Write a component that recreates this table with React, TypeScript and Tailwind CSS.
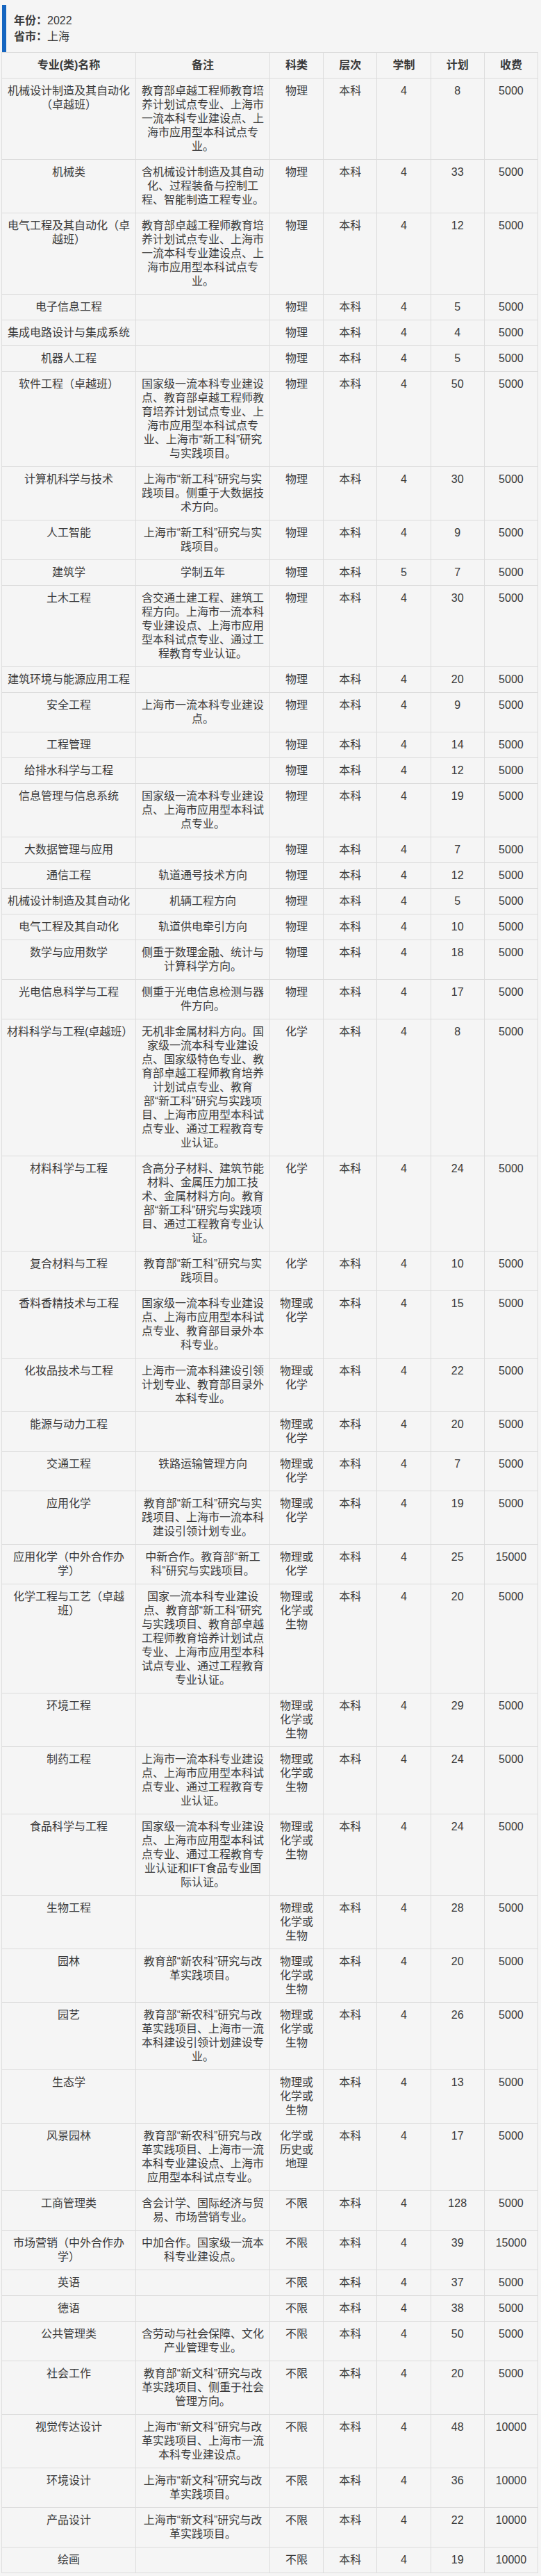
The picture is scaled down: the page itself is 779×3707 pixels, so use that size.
import React from 'react';

type Row = [string, string, string, number, number, number];

const rows: Row[] = [
  ['机械设计制造及其自动化（卓越班）', '教育部卓越工程师教育培养计划试点专业、上海市一流本科专业建设点、上海市应用型本科试点专业。', '物理', 4, 8, 5000],
  ['机械类', '含机械设计制造及其自动化、过程装备与控制工程、智能制造工程专业。', '物理', 4, 33, 5000],
  ['电气工程及其自动化（卓越班）', '教育部卓越工程师教育培养计划试点专业、上海市一流本科专业建设点、上海市应用型本科试点专业。', '物理', 4, 12, 5000],
  ['电子信息工程', '', '物理', 4, 5, 5000],
  ['集成电路设计与集成系统', '', '物理', 4, 4, 5000],
  ['机器人工程', '', '物理', 4, 5, 5000],
  ['软件工程（卓越班）', '国家级一流本科专业建设点、教育部卓越工程师教育培养计划试点专业、上海市应用型本科试点专业、上海市“新工科”研究与实践项目。', '物理', 4, 50, 5000],
  ['计算机科学与技术', '上海市“新工科”研究与实践项目。侧重于大数据技术方向。', '物理', 4, 30, 5000],
  ['人工智能', '上海市“新工科”研究与实践项目。', '物理', 4, 9, 5000],
  ['建筑学', '学制五年', '物理', 5, 7, 5000],
  ['土木工程', '含交通土建工程、建筑工程方向。上海市一流本科专业建设点、上海市应用型本科试点专业、通过工程教育专业认证。', '物理', 4, 30, 5000],
  ['建筑环境与能源应用工程', '', '物理', 4, 20, 5000],
  ['安全工程', '上海市一流本科专业建设点。', '物理', 4, 9, 5000],
  ['工程管理', '', '物理', 4, 14, 5000],
  ['给排水科学与工程', '', '物理', 4, 12, 5000],
  ['信息管理与信息系统', '国家级一流本科专业建设点、上海市应用型本科试点专业。', '物理', 4, 19, 5000],
  ['大数据管理与应用', '', '物理', 4, 7, 5000],
  ['通信工程', '轨道通号技术方向', '物理', 4, 12, 5000],
  ['机械设计制造及其自动化', '机辆工程方向', '物理', 4, 5, 5000],
  ['电气工程及其自动化', '轨道供电牵引方向', '物理', 4, 10, 5000],
  ['数学与应用数学', '侧重于数理金融、统计与计算科学方向。', '物理', 4, 18, 5000],
  ['光电信息科学与工程', '侧重于光电信息检测与器件方向。', '物理', 4, 17, 5000],
  ['材料科学与工程(卓越班）', '无机非金属材料方向。国家级一流本科专业建设点、国家级特色专业、教育部卓越工程师教育培养计划试点专业、教育部“新工科”研究与实践项目、上海市应用型本科试点专业、通过工程教育专业认证。', '化学', 4, 8, 5000],
  ['材料科学与工程', '含高分子材料、建筑节能材料、金属压力加工技术、金属材料方向。教育部“新工科”研究与实践项目、通过工程教育专业认证。', '化学', 4, 24, 5000],
  ['复合材料与工程', '教育部“新工科”研究与实践项目。', '化学', 4, 10, 5000],
  ['香料香精技术与工程', '国家级一流本科专业建设点、上海市应用型本科试点专业、教育部目录外本科专业。', '物理或化学', 4, 15, 5000],
  ['化妆品技术与工程', '上海市一流本科建设引领计划专业、教育部目录外本科专业。', '物理或化学', 4, 22, 5000],
  ['能源与动力工程', '', '物理或化学', 4, 20, 5000],
  ['交通工程', '铁路运输管理方向', '物理或化学', 4, 7, 5000],
  ['应用化学', '教育部“新工科”研究与实践项目、上海市一流本科建设引领计划专业。', '物理或化学', 4, 19, 5000],
  ['应用化学（中外合作办学）', '中新合作。教育部“新工科”研究与实践项目。', '物理或化学', 4, 25, 15000],
  ['化学工程与工艺（卓越班）', '国家一流本科专业建设点、教育部“新工科”研究与实践项目、教育部卓越工程师教育培养计划试点专业、上海市应用型本科试点专业、通过工程教育专业认证。', '物理或化学或生物', 4, 20, 5000],
  ['环境工程', '', '物理或化学或生物', 4, 29, 5000],
  ['制药工程', '上海市一流本科专业建设点、上海市应用型本科试点专业、通过工程教育专业认证。', '物理或化学或生物', 4, 24, 5000],
  ['食品科学与工程', '国家级一流本科专业建设点、上海市应用型本科试点专业、通过工程教育专业认证和IFT食品专业国际认证。', '物理或化学或生物', 4, 24, 5000],
  ['生物工程', '', '物理或化学或生物', 4, 28, 5000],
  ['园林', '教育部“新农科”研究与改革实践项目。', '物理或化学或生物', 4, 20, 5000],
  ['园艺', '教育部“新农科”研究与改革实践项目、上海市一流本科建设引领计划建设专业。', '物理或化学或生物', 4, 26, 5000],
  ['生态学', '', '物理或化学或生物', 4, 13, 5000],
  ['风景园林', '教育部“新农科”研究与改革实践项目、上海市一流本科专业建设点、上海市应用型本科试点专业。', '化学或历史或地理', 4, 17, 5000],
  ['工商管理类', '含会计学、国际经济与贸易、市场营销专业。', '不限', 4, 128, 5000],
  ['市场营销（中外合作办学）', '中加合作。国家级一流本科专业建设点。', '不限', 4, 39, 15000],
  ['英语', '', '不限', 4, 37, 5000],
  ['德语', '', '不限', 4, 38, 5000],
  ['公共管理类', '含劳动与社会保障、文化产业管理专业。', '不限', 4, 50, 5000],
  ['社会工作', '教育部“新文科”研究与改革实践项目、侧重于社会管理方向。', '不限', 4, 20, 5000],
  ['视觉传达设计', '上海市“新文科”研究与改革实践项目、上海市一流本科专业建设点。', '不限', 4, 48, 10000],
  ['环境设计', '上海市“新文科”研究与改革实践项目。', '不限', 4, 36, 10000],
  ['产品设计', '上海市“新文科”研究与改革实践项目。', '不限', 4, 22, 10000],
  ['绘画', '', '不限', 4, 19, 10000],
];

const headers = ['专业(类)名称', '备注', '科类', '层次', '学制', '计划', '收费'];

const cell = 'border border-[#dcdcdc] px-[7px] py-2 text-center align-top';

export default function App() {
  return (
    <div
      className="min-h-[3707px] bg-[#f5f5f5] px-[2px] pt-[7px] text-[16px] leading-5 text-[#3a3a3a]"
      style={{ fontFamily: '"Liberation Sans", "Noto Sans CJK SC", sans-serif' }}
    >
      {/* 年份 / 省市 */}
      <div className="ml-px border-l-[6px] border-[#1565c0] py-[11px] pl-[11px] leading-[23px]">
        <div>
          <span className="font-bold">年份：</span>2022
        </div>
        <div>
          <span className="font-bold">省市：</span>上海
        </div>
      </div>

      <table className="w-[773px] table-fixed border-collapse">
        <colgroup>
          <col className="w-[25%]" />
          <col className="w-[25%]" />
          <col className="w-[10%]" />
          <col className="w-[10%]" />
          <col className="w-[10%]" />
          <col className="w-[10%]" />
          <col className="w-[10%]" />
        </colgroup>
        <thead>
          <tr>
            {headers.map((h) => (
              <th key={h} className="border border-[#dcdcdc] px-[7px] py-2 text-center align-middle font-bold">
                {h}
              </th>
            ))}
          </tr>
        </thead>
        <tbody>
          {rows.map((r, i) => (
            <tr key={i}>
              <td className={cell}>{r[0]}</td>
              <td className={cell}>{r[1]}</td>
              <td className={cell}>{r[2]}</td>
              <td className={cell}>本科</td>
              <td className={cell}>{r[3]}</td>
              <td className={cell}>{r[4]}</td>
              <td className={cell}>{r[5]}</td>
            </tr>
          ))}
        </tbody>
      </table>
    </div>
  );
}
